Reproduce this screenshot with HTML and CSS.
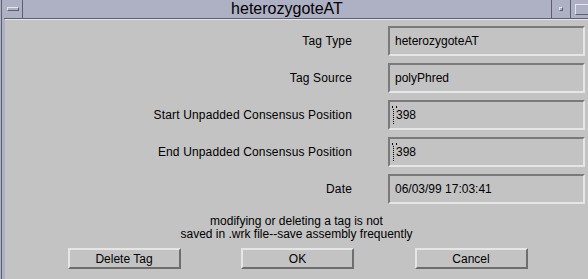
FILE: index.html
```html
<!DOCTYPE html>
<html lang="en">
<head>
    <meta charset="UTF-8">
    <meta name="viewport" content="width=device-width, initial-scale=1.0">
    <title>heterozygoteAT</title>
    <link rel="stylesheet" href="styles.css">
</head>
<body>
    <div class="window">
        <div class="titlebar">
            <div class="menu-btn"><span class="menu-bar"></span></div>
            <div class="title">heterozygoteAT</div>
            <div class="min-btn"><span class="min-dot"></span></div>
            <div class="max-btn"><span class="max-box"></span></div>
        </div>
        <div class="panel">
            <div class="fields">
                <div class="label">Tag Type</div>
                <div class="field">heterozygoteAT</div>

                <div class="label">Tag Source</div>
                <div class="field">polyPhred</div>

                <div class="label">Start Unpadded Consensus Position</div>
                <div class="field"><span class="cursor"></span>398</div>

                <div class="label">End Unpadded Consensus Position</div>
                <div class="field"><span class="cursor"></span>398</div>

                <div class="label">Date</div>
                <div class="field">06/03/99 17:03:41</div>
            </div>
            <p class="note">
                modifying or deleting a tag is not<br>
                saved in .wrk file--save assembly frequently
            </p>
            <div class="buttons">
                <button class="btn">Delete Tag</button>
                <button class="btn">OK</button>
                <button class="btn">Cancel</button>
            </div>
        </div>
    </div>
</body>
</html>
```

FILE: styles.css
```css
body {
    margin: 0;
    padding: 0;
    width: 588px;
    height: 279px;
    overflow: hidden;
    font-family: "Liberation Sans", Arial, sans-serif;
    font-size: 12px;
    color: #000;
    background: linear-gradient(to right, #aeb0c4 1px, #5e6070 1px 2px, #aeb0c4 2px);
}

.window {
    display: flex;
    flex-direction: column;
    height: 100%;
}

.titlebar {
    display: flex;
    align-items: stretch;
    height: 18px;
    border-bottom: 1px solid #5e6070;
    background-color: #aeb0c4;
    margin-left: 4px;
}

.menu-btn {
    width: 18px;
    border-right: 1px solid #5e6070;
    display: flex;
    align-items: center;
    justify-content: center;
}

.menu-bar {
    width: 10px;
    height: 2px;
    border: 1px solid;
    border-color: #e4e5ee #5e6070 #5e6070 #e4e5ee;
    background: #aeb0c4;
}

.title {
    flex: 1;
    text-align: center;
    font-size: 16px;
    line-height: 18px;
    color: #000;
}

.min-btn {
    width: 18px;
    border-left: 1px solid #5e6070;
    border-right: 1px solid #5e6070;
    display: flex;
    align-items: center;
    justify-content: center;
}

.min-dot {
    width: 2px;
    height: 2px;
    border: 1px solid;
    border-color: #e4e5ee #5e6070 #5e6070 #e4e5ee;
}

.max-btn {
    width: 13px;
    padding: 4px 0 0 4px;
}

.max-box {
    display: block;
    width: 12px;
    height: 9px;
    border: 1px solid;
    border-color: #e4e5ee #5e6070 #5e6070 #e4e5ee;
}

.panel {
    flex: 1;
    margin-left: 5px;
    background-color: #c3c3c3;
    border-top: 1px solid #e6e6e6;
    padding-top: 6px;
}

.fields {
    display: grid;
    grid-template-columns: 347px 197px;
    grid-auto-rows: 30px;
    column-gap: 36px;
    row-gap: 7px;
}

.label {
    display: flex;
    align-items: center;
    justify-content: flex-end;
    letter-spacing: 0.15px;
}

.field {
    display: flex;
    align-items: center;
    padding-left: 5px;
    border: 2px solid;
    border-color: #7a7a7a #e6e6e6 #e6e6e6 #7a7a7a;
}

.cursor {
    position: relative;
    width: 1px;
    height: 15px;
    margin: 2px 1px 0 -2px;
    border-left: 1px dotted #000;
}

/* little fork on top of the insert cursor */
.cursor::before {
    content: "";
    position: absolute;
    top: -3px;
    left: -2px;
    width: 3px;
    height: 2px;
    border-left: 1px solid #000;
    border-right: 1px solid #000;
}

.note {
    margin: 11px 0 0;
    text-align: center;
    line-height: 13px;
}

.buttons {
    display: flex;
    justify-content: space-evenly;
    margin-top: 7px;
    padding-left: 2px;
}

.btn {
    width: 113px;
    height: 21px;
    padding: 0;
    font-family: inherit;
    font-size: 12px;
    color: #000;
    background-color: #c3c3c3;
    border: 2px solid;
    border-color: #e6e6e6 #6e6e6e #6e6e6e #e6e6e6;
}
```
